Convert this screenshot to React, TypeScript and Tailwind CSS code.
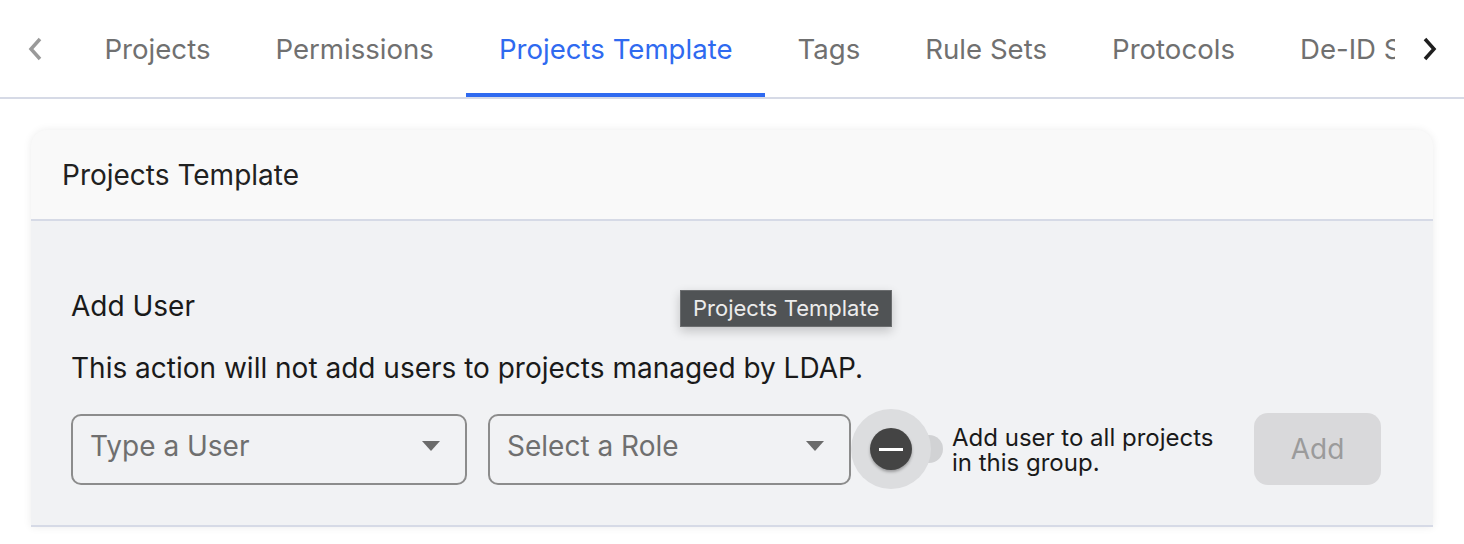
import React from 'react'

const tabs = ['Projects', 'Permissions', 'Projects Template', 'Tags', 'Rule Sets', 'Protocols', 'De-ID Settings']

function Caret() {
  return (
    <svg width="20" height="12" viewBox="0 0 20 12" className="shrink-0">
      <path d="M1 1 L19 1 L10 11 Z" fill="#6b6b6b" />
    </svg>
  )
}

function SelectBox({ placeholder, width }: { placeholder: string; width: string }) {
  return (
    <div
      className={`${width} h-[71px] shrink-0 flex items-center justify-between pl-[17px] pr-[24px] pb-[7px] border-2 border-[#8c8c8c] rounded-[10px]`}
    >
      <span className="text-[28px] text-[#6f6f6f]">{placeholder}</span>
      <Caret />
    </div>
  )
}

export default function App() {
  const active = 'Projects Template'
  return (
    <div className="w-[1464px] h-[544px] overflow-hidden bg-white font-['Inter','Noto_Sans',sans-serif]">
      {/* Tabs */}
      <div className="h-[99px] flex items-stretch border-b-2 border-[#d6dae6]">
        <div className="w-[72px] shrink-0 flex items-center pl-[26px]">
          <svg width="18" height="26" viewBox="0 0 18 26">
            <path d="M14 3 L5 13 L14 23" fill="none" stroke="#9a9a9a" strokeWidth="3.5" />
          </svg>
        </div>
        <div className="flex-1 flex overflow-hidden">
          {tabs.map((t) => (
            <div
              key={t}
              className={`shrink-0 px-[32.5px] flex items-center text-[27.6px] whitespace-nowrap border-b-4 ${
                t === active ? 'text-[#2f6af0] border-[#2f6af0]' : 'text-[#707070] border-transparent'
              }`}
            >
              <span className="pt-[6px]">{t}</span>
            </div>
          ))}
        </div>
        <div className="w-[69px] shrink-0 flex items-center justify-center">
          <svg width="18" height="26" viewBox="0 0 18 26">
            <path d="M4 3 L13 13 L4 23" fill="none" stroke="#1f1f1f" strokeWidth="3.5" />
          </svg>
        </div>
      </div>

      {/* Card */}
      <div className="px-[31px] pt-[31px]">
        <div className="rounded-t-[16px] shadow-[0_0_8px_rgba(0,0,0,0.08)] bg-[#f9f9f9]">
          <div className="h-[91px] flex items-center px-[31px] border-b-2 border-[#d6dae6] text-[28px] text-[#212121]">
            Projects Template
          </div>
          <div className="relative bg-[#f1f2f4] px-[40px] pt-[67px] pb-[36px] border-b-2 border-[#d6dae6]">
            <div className="text-[28px] text-[#1a1a1a] leading-[36px]">Add User</div>
            <div className="mt-[26px] text-[28px] text-[#1a1a1a] leading-[36px]">
              This action will not add users to projects managed by LDAP.
            </div>
            <div className="mt-[23px] flex items-center">
              <SelectBox placeholder="Type a User" width="w-[396px]" />
              <div className="w-[21px] shrink-0" />
              <SelectBox placeholder="Select a Role" width="w-[363px]" />
              {/* Switch */}
              <div className="relative w-[101px] h-[80px] shrink-0">
                <div className="absolute left-[20px] top-[26px] w-[72px] h-[28px] rounded-full bg-[#d1d2d4]" />
                <div className="absolute left-0 top-0 w-[80px] h-[80px] rounded-full bg-[#dcdddf]" />
                <div className="absolute left-[19px] top-[19px] w-[42px] h-[42px] rounded-full bg-[#444444] shadow-[0_2px_3px_rgba(0,0,0,0.3)] flex items-center justify-center">
                  <div className="w-[24px] h-[3px] bg-white" />
                </div>
              </div>
              <div className="text-[24px] leading-[25px] text-[#1a1a1a] w-[282px] shrink-0 pt-[1px]">
                Add user to all projects in this group.
              </div>
              <div className="ml-[20px] w-[127px] h-[72px] shrink-0 rounded-[14px] bg-[#d9d9db] flex items-center justify-center text-[28px] text-[#9b9b9b]">
                Add
              </div>
            </div>

            {/* Tooltip */}
            <div className="absolute left-[649px] top-[69px] px-[12px] h-[37px] flex items-center bg-[#505355] border border-[#6b6d6f] text-[22px] text-[#ececec] shadow-[0_4px_10px_rgba(0,0,0,0.2)] whitespace-nowrap">
              Projects Template
            </div>
          </div>
        </div>
      </div>
    </div>
  )
}
